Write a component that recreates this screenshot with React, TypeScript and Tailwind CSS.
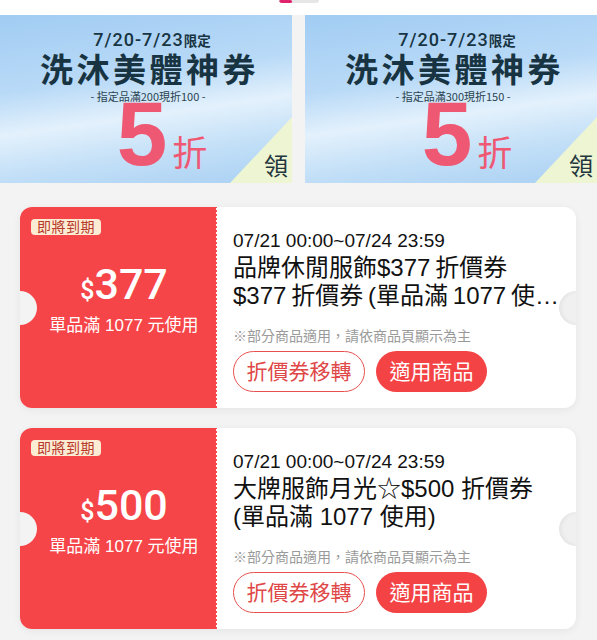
import React from 'react';

const CJK = '"Noto Sans CJK TC", "Noto Sans CJK SC", sans-serif';
const UI = '"Liberation Sans", "Noto Sans CJK TC", sans-serif';
const NUM = 'Roboto, "Liberation Sans", sans-serif';

interface Banner {
  rule: string;
}

interface Coupon {
  amount: string;
  min: string;
  period: string;
  title: string;
}

const banners: Banner[] = [
  { rule: '- 指定品滿200現折100 -' },
  { rule: '- 指定品滿300現折150 -' },
];

const coupons: Coupon[] = [
  {
    amount: '377',
    min: '單品滿 1077 元使用',
    period: '07/21 00:00~07/24 23:59',
    title: '品牌休閒服飾$377\u2009折價券 $377\u2009折價券\u2009(單品滿\u20091077\u2009使用)',
  },
  {
    amount: '500',
    min: '單品滿 1077 元使用',
    period: '07/21 00:00~07/24 23:59',
    title: '大牌服飾月光☆$500 折價券 (單品滿 1077 使用)',
  },
];

const BannerCard: React.FC<{ banner: Banner }> = ({ banner }) => (
  <div
    className="relative w-[292px] h-[168px] shrink-0 overflow-hidden bg-[linear-gradient(172deg,#a1ccf3_0%,#b9daf7_38%,#e3f1fc_58%,#c2dff7_78%,#a9d0f3_100%)]"
    style={{ fontFamily: CJK }}
  >
    {/* pale corner triangle */}
    <div className="absolute right-0 bottom-0 w-[62px] h-[66px] bg-[#eef5d2] [clip-path:polygon(100%_0,100%_100%,0_100%)]" />
    <div className="flex flex-col items-center pt-[15px] pl-[4px] text-[#183442]">
      <div className="flex items-baseline h-[20px] leading-[20px] pl-[8px]">
        <span className="text-[18px] font-medium tracking-[1px]" style={{ fontFamily: NUM }}>7/20-7/23</span>
        <span className="text-[13.5px] font-bold">限定</span>
      </div>
      <div className="mt-[2px] h-[33px] leading-[33px] text-[33px] font-bold tracking-[3.5px] pl-[3px]">
        洗沐美體神券
      </div>
      <div className="mt-[4px] h-[14px] leading-[14px] text-[11px] text-[#2b4450]">{banner.rule}</div>
      <div className="flex items-end h-[66px] -mt-[2px] pl-[28px] text-[#ef5873]">
        <span className="text-[91px] leading-[66px] font-bold" style={{ fontFamily: UI }}>5</span>
        <span className="ml-[5px] text-[35px] leading-[40px] -mb-[4px]">折</span>
      </div>
    </div>
    <span className="absolute right-[4px] bottom-[4px] text-[24px] leading-[28px] text-[#24363d]">領</span>
  </div>
);

const CouponCard: React.FC<{ coupon: Coupon }> = ({ coupon }) => (
  <div
    className="relative flex h-[201px] rounded-[12px] bg-white overflow-hidden shadow-[0_2px_8px_rgba(0,0,0,0.06)]"
    style={{ fontFamily: UI }}
  >
    <div className="relative w-[197px] shrink-0 bg-[#f64548] text-white">
      <span className="absolute left-[11px] top-[12px] h-[16px] px-[6px] rounded-[4px] bg-[#fdecd4] text-[#b7392b] text-[14px] tracking-[0.5px] leading-[16px]">
        即將到期
      </span>
      <div className="flex flex-col items-center pt-[56px] pl-[11px]">
        <div className="flex items-baseline h-[42px] leading-[42px]" style={{ fontFamily: NUM }}>
          <span className="text-[25px] font-medium">$</span>
          <span className="text-[43px] font-medium">{coupon.amount}</span>
        </div>
        <div className="mt-[11px] text-[17px] leading-[20px]">{coupon.min}</div>
      </div>
      <div className="absolute right-0 top-0 bottom-0 w-[3px] bg-[radial-gradient(circle_at_100%_50%,#fff_1.1px,transparent_1.6px)] bg-[length:3px_4px]" />
    </div>
    <div className="flex flex-col min-w-0 flex-1 pl-[16px] pr-[12px] pt-[23px]">
      <div className="text-[19px] leading-[22px] text-[#111]">{coupon.period}</div>
      <div className="mt-[2px] text-[24px] leading-[28px] text-[#111] line-clamp-2 h-[56px]">{coupon.title}</div>
      <div className="mt-[17px] text-[14px] leading-[18px] text-[#9a9a9a]">※部分商品適用，請依商品頁顯示為主</div>
      <div className="mt-[6px] flex gap-[11px]">
        <button className="h-[41px] w-[132px] rounded-full border-[1.5px] border-[#e85050] text-[#e04848] text-[21px] leading-[38px]">
          折價券移轉
        </button>
        <button className="h-[41px] w-[111px] rounded-full bg-[#f44345] text-white text-[21px] leading-[41px]">
          適用商品
        </button>
      </div>
    </div>
    {/* ticket notches */}
    <div className="absolute left-[-17px] top-1/2 -translate-y-1/2 w-[34px] h-[34px] rounded-full bg-[#f3f3f3]" />
    <div className="absolute right-[-17px] top-1/2 -translate-y-1/2 w-[34px] h-[34px] rounded-full bg-[#f0f0f0] shadow-[inset_2px_0_4px_rgba(0,0,0,0.06)]" />
  </div>
);

export default function App() {
  return (
    <div className="w-[597px] h-[640px] overflow-hidden bg-[#f3f3f3]">
      <div className="h-[15px] bg-white flex justify-center">
        <div className="w-[40px] h-[3px] rounded-b-full bg-[#e6e6e6] overflow-hidden">
          <div className="w-[13px] h-[3px] rounded-full bg-[#e0236d]" />
        </div>
      </div>
      <div className="flex gap-[13px]">
        {banners.map((b, i) => (
          <BannerCard key={i} banner={b} />
        ))}
      </div>
      <div className="flex flex-col gap-[20px] pt-[24px] pl-[20px] pr-[21px]">
        {coupons.map((c, i) => (
          <CouponCard key={i} coupon={c} />
        ))}
      </div>
    </div>
  );
}
